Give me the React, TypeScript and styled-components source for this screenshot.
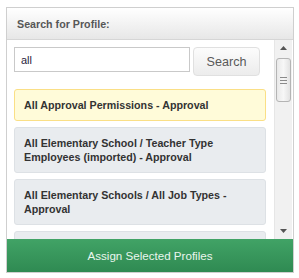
import React from 'react'
import styled, { createGlobalStyle } from 'styled-components'

const GlobalStyle = createGlobalStyle`
  html, body {
    margin: 0;
    padding: 0;
    background: #ffffff;
  }
  body {
    font-family: 'Liberation Sans', Arial, sans-serif;
  }
`

const Page = styled.div`
  padding: 7px 5px 0 6px;
  width: 299px;
  height: 278px;
  box-sizing: border-box;
`

const Panel = styled.div`
  width: 288px;
  height: 266px;
  border: 1px solid #cfcfcf;
  box-sizing: border-box;
  display: flex;
  flex-direction: column;
  background: #ffffff;
`

const Header = styled.div`
  height: 32px;
  flex: none;
  box-sizing: border-box;
  border-bottom: 1px solid #d6d6d6;
  background: linear-gradient(#ffffff, #e7e7e7);
  display: flex;
  align-items: center;
  padding: 0 10px;
  font-size: 10.7px;
  font-weight: bold;
  color: #575757;
`

const Body = styled.div`
  flex: 1;
  display: flex;
  min-height: 0;
`

const Content = styled.div`
  flex: 1;
  overflow: hidden;
  padding: 7px 8px 0 7px;
`

const SearchRow = styled.div`
  display: flex;
  align-items: flex-start;
  gap: 3px;
  margin-bottom: 13px;
`

const SearchInput = styled.input`
  width: 176px;
  height: 25px;
  box-sizing: border-box;
  border: 1px solid #c9c9c9;
  padding: 0 6px;
  font-family: 'Liberation Sans', Arial, sans-serif;
  font-size: 11px;
  color: #2a2440;
  outline: none;
  background: #ffffff;
`

const SearchButton = styled.button`
  width: 67px;
  height: 29px;
  box-sizing: border-box;
  border: 1px solid #e0e0e0;
  border-radius: 4px;
  background: linear-gradient(#fcfcfc, #ececec);
  font-family: 'Liberation Sans', Arial, sans-serif;
  font-size: 12.6px;
  color: #595959;
  padding: 0;
`

const List = styled.div`
  display: flex;
  flex-direction: column;
  gap: 6px;
`

const Item = styled.div<{ $active?: boolean }>`
  border: 1px solid ${(p) => (p.$active ? '#fadf86' : '#dde1e5')};
  background: ${(p) => (p.$active ? '#fffbd9' : '#e9ecef')};
  border-radius: 3px;
  padding: 8px 9px;
  font-size: 10.7px;
  line-height: 14px;
  font-weight: bold;
  color: #333333;
`

const Scrollbar = styled.div`
  width: 17px;
  flex: none;
  margin-right: 1px;
  background: #f1f1f1;
  border-left: 1px solid #e6e6e6;
  display: flex;
  flex-direction: column;
  align-items: center;
`

const Arrow = styled.div`
  height: 16px;
  display: flex;
  align-items: center;
  justify-content: center;
`

const Thumb = styled.div`
  width: 15px;
  height: 44px;
  box-sizing: border-box;
  margin-top: 2px;
  border: 1px solid #b4b4b4;
  border-radius: 3px;
  background: linear-gradient(90deg, #e9e9e9, #f7f7f7 50%, #e2e2e2);
  display: flex;
  flex-direction: column;
  align-items: center;
  justify-content: center;
  gap: 2px;
`

const Grip = styled.div`
  width: 7px;
  height: 1px;
  background: #8a8a8a;
`

const Track = styled.div`
  flex: 1;
`

const Footer = styled.button`
  height: 33px;
  flex: none;
  width: 100%;
  border: none;
  margin: 0;
  background: linear-gradient(#41a366, #2f8a52);
  color: #e9f6ee;
  font-family: 'Liberation Sans', Arial, sans-serif;
  font-size: 11.6px;
`

const items = [
  'All Approval Permissions - Approval',
  'All Elementary School / Teacher Type Employees (imported) - Approval',
  'All Elementary Schools / All Job Types - Approval',
  'All High Schools / All Job Types - Approval'
]

const Triangle = ({ up }: { up?: boolean }) => (
  <svg width='7' height='4' viewBox='0 0 7 4'>
    <path d={up ? 'M0 4 L3.5 0 L7 4 Z' : 'M0 0 L3.5 4 L7 0 Z'} fill='#555' />
  </svg>
)

const App = () => (
  <>
    <GlobalStyle />
    <Page>
      <Panel>
        <Header>Search for Profile:</Header>
        <Body>
          <Content>
            <SearchRow>
              <SearchInput defaultValue='all' />
              <SearchButton>Search</SearchButton>
            </SearchRow>
            <List>
              {items.map((text, i) => (
                <Item key={text} $active={i === 0}>
                  {text}
                </Item>
              ))}
            </List>
          </Content>
          <Scrollbar>
            <Arrow>
              <Triangle up />
            </Arrow>
            <Thumb>
              <Grip />
              <Grip />
              <Grip />
            </Thumb>
            <Track />
            <Arrow>
              <Triangle />
            </Arrow>
          </Scrollbar>
        </Body>
        <Footer>Assign Selected Profiles</Footer>
      </Panel>
    </Page>
  </>
)

export default App
